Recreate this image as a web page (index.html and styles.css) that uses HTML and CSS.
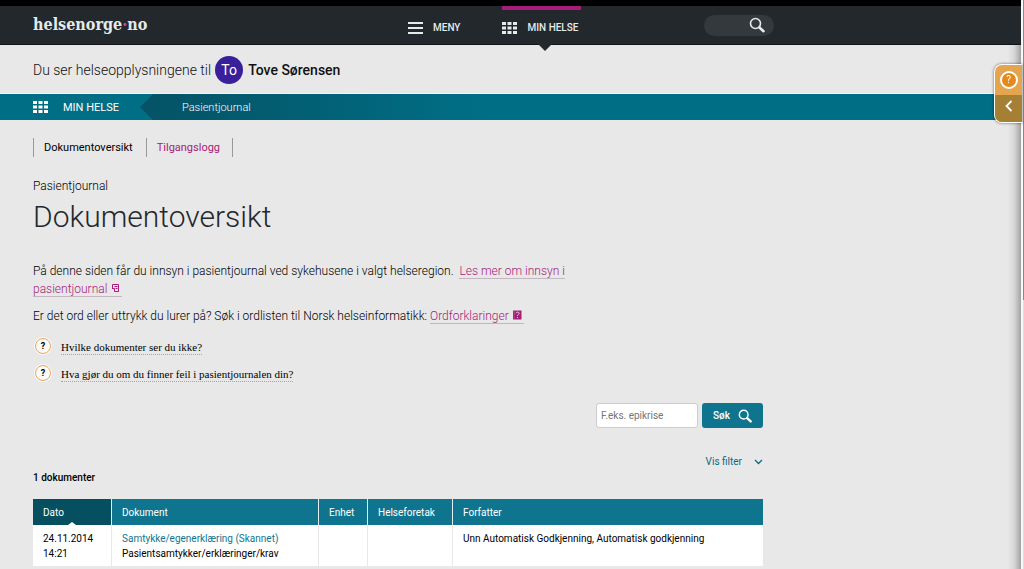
FILE: index.html
```html
<!DOCTYPE html>
<html lang="no">
<head>
<meta charset="utf-8">
<title>Dokumentoversikt - helsenorge.no</title>
<link rel="stylesheet" href="styles.css">
</head>
<body>
<svg class="defs" aria-hidden="true">
  <symbol id="grid" viewBox="0 0 15 12"><path d="M0 0h4v3H0zM5.500 0h4v3h-4zM11 0h4v3h-4zM0 4.500h4v3H0zM5.500 4.500h4v3h-4zM11 4.500h4v3h-4zM0 9h4v3H0zM5.500 9h4v3h-4zM11 9h4v3h-4z" fill="currentColor"/></symbol>
  <symbol id="search" viewBox="0 0 16 16"><circle cx="6.500" cy="6.500" r="5" fill="none" stroke="currentColor" stroke-width="1.600"/><path d="M10.500 10.500l4 3.700" stroke="currentColor" stroke-width="2.600" stroke-linecap="round"/></symbol>
</svg>
<div class="page">
  <header class="top">
    <div class="top-inner">
      <a class="logo" href="#">helsenorge<span class="logo-dot">·</span>no</a>
      <nav class="top-nav">
        <button class="top-item" type="button">
          <svg class="icon-grid" viewBox="0 0 15 12" aria-hidden="true"><path d="M0 1h15M0 6h15M0 11h15" stroke="currentColor" stroke-width="2"/></svg>
          MENY
        </button>
        <a class="top-item top-item-active" href="#"><svg class="icon-grid" aria-hidden="true"><use href="#grid"/></svg>MIN HELSE</a>
      </nav>
      <button class="top-search" type="button" aria-label="Søk"><svg class="icon-search" aria-hidden="true"><use href="#search"/></svg></button>
    </div>
  </header>
  <div class="person">Du ser helseopplysningene til <span class="avatar">To</span> <strong class="person-name">Tove Sørensen</strong></div>
  <nav class="crumbs">
    <a class="crumb-home" href="#"><svg class="icon-grid" aria-hidden="true"><use href="#grid"/></svg>MIN HELSE</a>
    <a class="crumb" href="#">Pasientjournal</a>
  </nav>
  <main class="main">
    <nav class="tabs">
      <a class="tab tab-current" href="#">Dokumentoversikt</a>
      <a class="tab" href="#">Tilgangslogg</a>
    </nav>
    <p class="kicker">Pasientjournal</p>
    <h1 class="title">Dokumentoversikt</h1>
    <div class="intro">
      <p class="intro-text">På denne siden får du innsyn i pasientjournal ved sykehusene i valgt helseregion.&nbsp; <a class="link" href="#">Les mer om innsyn i pasientjournal <svg class="icon-doc" viewBox="0 0 9 10" aria-hidden="true"><path d="M1.500 5.500v-4h6v7h-4M1 5.500h2.500v3M3.500 3.500h3M4.500 5.500h2" fill="none" stroke="currentColor"/></svg></a></p>
      <p class="intro-text">Er det ord eller uttrykk du lurer på? Søk i ordlisten til Norsk helseinformatikk: <a class="link" href="#">Ordforklaringer <svg class="icon-doc" viewBox="0 0 9 10" aria-hidden="true"><path d="M0 .500h8.500v9H0z" fill="currentColor"/><path d="M3 3.200c.300-1.500 3.200-1.500 3.200.100 0 1.200-1.700 1-1.700 2.500M4.500 7v1" fill="none" stroke="#e8d0e0"/><path d="M1.200 1v8" stroke="#c460a4" stroke-width=".6"/></svg></a></p>
    </div>
    <ul class="help">
      <li class="help-row"><span class="help-icon">?</span><a class="help-link" href="#">Hvilke dokumenter ser du ikke?</a></li>
      <li class="help-row"><span class="help-icon">?</span><a class="help-link" href="#">Hva gjør du om du finner feil i pasientjournalen din?</a></li>
    </ul>
    <form class="search">
      <input class="search-input" type="text" placeholder="F.eks. epikrise" aria-label="Søk i dokumenter">
      <button class="search-button" type="button">Søk <svg class="icon-search-small" aria-hidden="true"><use href="#search"/></svg></button>
    </form>
    <button class="filter" type="button">Vis filter <svg class="icon-chevron" viewBox="0 0 9 6" aria-hidden="true"><path d="M1 1l3.500 3.500L8 1" fill="none" stroke="currentColor" stroke-width="1.300"/></svg></button>
    <table class="docs">
      <caption class="docs-count">1 dokumenter</caption>
      <thead>
        <tr><th class="col-date">Dato</th><th class="col-doc">Dokument</th><th class="col-unit">Enhet</th><th class="col-trust">Helseforetak</th><th>Forfatter</th></tr>
      </thead>
      <tbody>
        <tr><td>24.11.2014<br>14:21</td><td><a class="doc-link" href="#">Samtykke/egenerklæring (Skannet)</a><br>Pasientsamtykker/erklæringer/krav</td><td></td><td></td><td>Unn Automatisk Godkjenning, Automatisk godkjenning</td></tr>
      </tbody>
    </table>
  </main>
</div>
<div class="edge"></div>
<div class="scroll"></div>
<button class="helper" type="button" aria-label="Hjelp">
  <span class="helper-part"><span class="helper-mark">?</span></span>
  <span class="helper-part helper-bottom"><svg class="icon-back" viewBox="0 0 8 12" aria-hidden="true"><path d="M6.500 1L1.500 6l5 5" fill="none" stroke="currentColor" stroke-width="1.800"/></svg></span>
</button>
</body>
</html>
```
FILE: styles.css
```css
* { box-sizing: border-box; }
html { overflow: hidden; }
body { margin: 0; background: #e8e8e8; color: #000; font-family: Roboto, "Liberation Sans", sans-serif; font-size: 10px; line-height: 15px; }
a { color: inherit; text-decoration: none; }
button { margin: 0; padding: 0; border: 0; background: none; color: inherit; font: inherit; }
p, h1, ul { margin: 0; padding: 0; }
svg { flex: none; }
.defs { position: absolute; width: 0; height: 0; }
.icon-grid { width: 15px; height: 12px; }

.top { background: #23282c; border-top: 6px solid #000; border-bottom: 1px solid #101416; }
.top-inner { display: grid; grid-template-columns: 375px 1fr 70px; max-width: 774px; height: 38px; padding-left: 33px; color: #e4ebea; }
.logo { align-self: center; font-family: "DejaVu Serif Condensed", "DejaVu Serif", serif; font-weight: bold; font-size: 16px; line-height: 20px; }
.logo-dot { color: #e0409f; }
.top-nav { display: flex; gap: 42px; }
.top-item { display: flex; align-items: center; gap: 10px; padding-top: 5px; color: #e4ebea; font-weight: 500; }
.top-item-active { position: relative; box-shadow: inset 0 4px #a61c78; padding-right: 3px; }
.top-item-active::after { content: ""; position: absolute; top: 100%; left: 50%; margin-left: -4px; border: 7px solid transparent; border-top-color: #23282c; border-bottom: 0; }
.top-search { align-self: center; display: flex; justify-content: flex-end; align-items: center; height: 21px; padding-right: 9px; border-radius: 11px; background: #34393d; }
.icon-search { width: 16px; height: 16px; }

.person { display: flex; align-items: center; height: 49px; padding: 2px 0 0 33px; font-size: 14px; font-weight: 300; color: #111; border-bottom: 1px solid #f4f4f4; }
.avatar { display: flex; align-items: center; justify-content: center; width: 28px; height: 28px; margin: 0 5px 0 4px; border-radius: 50%; background: #39209a; color: #fff; font-size: 14px; font-weight: 400; }
.person-name { font-weight: 500; }

.crumbs { display: flex; height: 26px; background: #006f86; color: #fff; }
.crumb-home { display: flex; align-items: center; gap: 15px; width: 140px; padding-left: 33px; font-size: 11px; }
.crumb { flex: 1; display: flex; align-items: center; padding-left: 42px; font-size: 11px; font-weight: 300; background: linear-gradient(90deg, #055265, #006f86 350px); clip-path: polygon(0 50%, 13px 0, 100% 0, 100% 100%, 13px 100%); }

.main { max-width: 796px; padding: 18px 33px 0; }
.tabs { display: flex; font-size: 11px; line-height: 19px; }
.tab { padding: 0 12px 0 10px; color: #a61c78; border-right: 1px solid #999; }
.tab-current { padding-right: 13px; color: #000; border-left: 1px solid #999; }
.kicker { margin-top: 20px; font-size: 12px; line-height: 18px; font-weight: 300; }
.title { font-size: 30px; line-height: 44px; font-weight: 300; color: #23282c; }
.intro { max-width: 540px; margin-top: 23px; }
.intro-text { margin-bottom: 9px; font-size: 12px; line-height: 18px; font-weight: 300; }
.link { color: #a61c78; border-bottom: 1px solid #c0b8be; }
.icon-doc { width: 9px; height: 10px; margin: 0 2px 0 1px; }
.help { list-style: none; margin-top: 9px; }
.help-row { display: flex; align-items: center; gap: 9px; height: 27px; }
.help-icon { display: flex; align-items: center; justify-content: center; width: 16px; height: 16px; margin: 0 1px 3px 2px; border: 1px solid #e4a85c; border-radius: 50%; background: #fafafa; box-shadow: 0 0 0 1px #fafafa; font-size: 9px; font-weight: 700; }
.help-link { font-family: "Liberation Serif", serif; font-size: 11px; line-height: 13px; border-bottom: 1px dotted #e29a3e; }

.search { display: flex; justify-content: flex-end; gap: 4px; margin-top: 15px; }
.search-input { width: 102px; height: 25px; padding: 0 4px; border: 1px solid #ccc; border-radius: 3px; background: #fff; font: 400 10px Roboto, sans-serif; }
.search-input::placeholder { color: #757575; }
.search-button { display: flex; align-items: center; justify-content: center; gap: 8px; width: 61px; height: 25px; border-radius: 3px; background: #0f758e; color: #fff; font-weight: 500; }
.icon-search-small { width: 14px; height: 14px; }
.filter { display: flex; align-items: center; gap: 12px; margin: 26px 0 0 auto; color: #0b6a83; }
.icon-chevron { width: 9px; height: 6px; }

.docs { width: 100%; border-collapse: separate; border-spacing: 0; table-layout: fixed; }
.docs-count { padding: 1px 0 14px; text-align: left; font-weight: 500; }
.docs th { height: 26px; padding: 1px 10px 0; border-right: 1px solid #e4eff2; background: #0f758e; color: #fff; font-weight: 400; text-align: left; }
.docs td { height: 41px; padding: 6px 10px 5px; border-right: 1px solid #e8e8e8; background: #fff; vertical-align: top; }
.docs th:last-child, .docs td:last-child { border-right: 0; }
.docs .col-date { position: relative; width: 79px; background: #054f60; }
.col-date::after { content: ""; position: absolute; left: 50%; bottom: 0; margin-left: -4px; border: 4px solid transparent; border-bottom: 3px solid #fff; border-top: 0; }
.col-doc { width: 207px; }
.col-unit { width: 49px; }
.col-trust { width: 85px; }
.doc-link { color: #0f758e; }

.edge { position: fixed; top: 45px; bottom: 0; right: 3px; width: 13px; background: linear-gradient(90deg, transparent, rgba(0, 0, 0, .08) 50%, rgba(0, 0, 0, .3)); }
.scroll { position: fixed; top: 0; right: 0; bottom: 0; width: 3px; border-left: 2px solid #f8f8f8; background: linear-gradient(#888 300px, #ddd 300px); }
.helper { position: fixed; top: 64px; right: 2px; width: 28px; height: 59px; overflow: hidden; border: 1px solid #fff; border-right: 0; border-radius: 8px 0 0 8px; box-shadow: 0 0 3px rgba(0, 0, 0, .6); background: #e3a550; color: #fff; }
.helper-part { display: flex; align-items: center; justify-content: center; height: 30px; }
.helper-bottom { height: 27px; padding-bottom: 6px; background: #a58034; }
.helper-mark { width: 18px; height: 18px; border: 2px solid #fff; border-radius: 50%; background: #e58a1a; font-size: 10px; line-height: 14px; }
.icon-back { width: 8px; height: 12px; }
```
